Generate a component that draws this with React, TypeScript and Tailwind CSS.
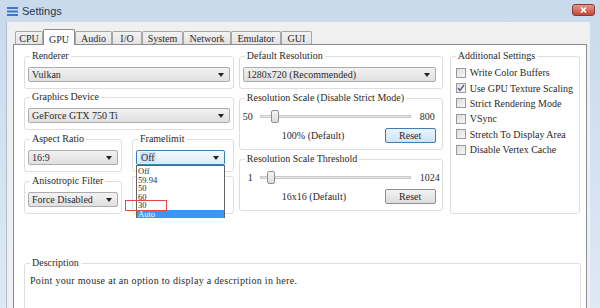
import React from 'react'

const serif = "font-['Liberation_Serif',serif]"

function Arrow() {
  return (
    <svg width="6" height="4" viewBox="0 0 6 4" className="shrink-0">
      <path d="M0 0 L6 0 L3 4 Z" fill="#222" />
    </svg>
  )
}

function Combo({ text, focused, w }: { text: string; focused?: boolean; w?: string }) {
  return (
    <div
      className={`mt-[6px] h-[15px] flex items-center rounded-[2px] border pl-[3px] pr-[5px] ${w ?? ''} ${
        focused
          ? 'border-[#3c7fb1] bg-linear-to-b from-[#f4f9fd] to-[#dcecf9]'
          : 'border-[#acacac] bg-linear-to-b from-[#f2f2f2] to-[#e0e0e0]'
      }`}
    >
      <span className="flex-1 whitespace-nowrap">
        {focused ? <span className="bg-[#cfe3f7] px-[1px]">{text}</span> : text}
      </span>
      <Arrow />
    </div>
  )
}

function Group({ title, className, children }: { title?: string; className?: string; children?: React.ReactNode }) {
  return (
    <fieldset className={`border border-[#dedede] rounded-[3px] px-[3px] pb-[6px] ${className ?? ''}`}>
      {title && <legend className="ml-[2px] px-[2px] leading-[10px] whitespace-nowrap">{title}</legend>}
      {children}
    </fieldset>
  )
}

function Slider({ min, max, pos }: { min: string; max: string; pos: number }) {
  return (
    <div className="h-[16px] mt-[5px] flex items-center">
      <span className="w-[15px] text-right pr-[5px] shrink-0">{min}</span>
      <div className="relative flex-1 h-[3px] mx-[2px] border border-[#c8c8c8] bg-[#e8e8e8]">
        <div
          className="absolute top-[-6px] w-[8px] h-[13px] rounded-[2px] border border-[#8e8f8f] bg-linear-to-b from-[#f6f6f6] to-[#dcdcdc]"
          style={{ left: pos }}
        />
      </div>
      <span className="w-[26px] pl-[7px] shrink-0">{max}</span>
    </div>
  )
}

function ResetRow({ label, focused }: { label: string; focused?: boolean }) {
  return (
    <div className="mt-[4px] h-[15px] flex items-center">
      <span className="pl-[39px] flex-1 whitespace-nowrap">{label}</span>
      <div
        className={`w-[51px] h-[15px] mr-[3px] rounded-[2px] border flex items-center justify-center ${
          focused
            ? 'border-[#3c7fb1] bg-linear-to-b from-[#eaf4fc] to-[#cde4f7]'
            : 'border-[#8f8f8f] bg-linear-to-b from-[#f3f3f3] to-[#dddddd]'
        }`}
      >
        Reset
      </div>
    </div>
  )
}

function Check({ label, checked }: { label: string; checked?: boolean }) {
  return (
    <div className="h-[15.4px] flex items-center">
      <div className="w-[10px] h-[10px] ml-[2px] mr-[4px] shrink-0 border border-[#9a9a9a] bg-linear-to-br from-[#dedede] to-[#f8f8f8] flex items-center justify-center">
        {checked && (
          <svg width="8" height="8" viewBox="0 0 8 8">
            <path d="M1 4 L3 6.5 L7 1" stroke="#4a5d80" strokeWidth="1.3" fill="none" />
          </svg>
        )}
      </div>
      <span className="whitespace-nowrap">{label}</span>
    </div>
  )
}

const tabs: [string, string][] = [
  ['CPU', 'w-[28px]'],
  ['GPU', 'w-[32px]'],
  ['Audio', 'w-[37px]'],
  ['I/O', 'w-[30px]'],
  ['System', 'w-[41px]'],
  ['Network', 'w-[48px]'],
  ['Emulator', 'w-[50px]'],
  ['GUI', 'w-[31px]'],
]

const frameOptions = ['Off', '59.94', '50', '60', '30']

export default function App() {
  return (
    <div className={`w-[600px] h-[308px] overflow-hidden flex flex-col bg-linear-to-b from-[#c9daec] to-[#dfe9f4] text-[10px] text-[#2a2a2a] ${serif}`}>
      {/* title bar */}
      <div className="h-[22px] shrink-0 flex items-center pl-[7px] pr-[5px]">
        <svg width="11" height="9" viewBox="0 0 11 9" className="mr-[4px]">
          <rect x="0" y="0" width="11" height="2" fill="#3a78c8" />
          <rect x="0" y="3.5" width="11" height="2" fill="#3a78c8" />
          <rect x="0" y="7" width="11" height="2" fill="#3a78c8" />
        </svg>
        <span className="font-['Liberation_Sans',sans-serif] text-[11px] text-[#1e3654]">Settings</span>
        <div className="ml-auto mt-[-2px] w-[23px] h-[12px] rounded-[3px] border border-[#8c3a32] bg-linear-to-b from-[#e8968a] to-[#c4443a] flex items-center justify-center">
          <svg width="7" height="6" viewBox="0 0 7 6">
            <path d="M1 0.5 L6 5.5 M6 0.5 L1 5.5" stroke="white" strokeWidth="1.6" />
          </svg>
        </div>
      </div>

      {/* client */}
      <div className="flex-1 ml-[6px] mr-[10px] border-l border-[#a9bdd3] bg-[#f0f0f0] pl-[6px] pr-[3px] pt-[7px] flex flex-col">
        <div className="h-[15px] flex items-end pl-[2px]">
          {tabs.map(([t, w]) =>
            t === 'GPU' ? (
              <div key={t} className={`${w} h-[16px] -mb-px relative z-10 bg-white border border-b-0 border-[#8c8c8c] rounded-t-[2px] flex items-start pt-[2px] justify-center`}>
                {t}
              </div>
            ) : (
              <div key={t} className={`${w} h-[13px] border border-b-0 border-[#a6a6a6] rounded-t-[2px] bg-linear-to-b from-[#f3f3f3] to-[#e3e3e3] flex items-center justify-center`}>
                {t}
              </div>
            ),
          )}
        </div>

        <div className="flex-1 bg-white border border-[#8c8c8c] pt-[6px] pl-[10px] pr-[6px] flex flex-col">
          <div className="flex items-stretch">
            {/* left column */}
            <div className="w-[211px] flex flex-col">
              <Group title="Renderer">
                <Combo text="Vulkan" />
              </Group>
              <Group title="Graphics Device" className="mt-[3px]">
                <Combo text="GeForce GTX 750 Ti" />
              </Group>
              <div className="mt-[4px] flex gap-[10px]">
                <Group title="Aspect Ratio" className="w-[98px]">
                  <Combo text="16:9" />
                </Group>
                <Group title="Framelimit" className="flex-1 pr-[8px] pl-[3px]">
                  <div className="relative">
                    <Combo text="Off" focused />
                    <div className="absolute left-0 top-full w-full h-[53px] z-20 bg-white border border-[#646464] pt-[1px] flex flex-col text-[8.5px] leading-[8.5px]">
                      {frameOptions.map((o) => (
                        <span key={o} className="pl-[1px] h-[8.5px]">{o}</span>
                      ))}
                      <span className="pl-[1px] mt-auto h-[9px] bg-[#3399ff] text-white">Auto</span>
                      <div className="absolute left-[-12px] top-[34px] w-[42px] h-[11px] border border-[#e2474a]" />
                    </div>
                  </div>
                </Group>
              </div>
              <div className="mt-[4px] flex gap-[10px]">
                <Group title="Anisotropic Filter" className="w-[98px]">
                  <Combo text="Force Disabled" />
                </Group>
                <Group className="flex-1 h-[38px]" />
              </div>
            </div>

            {/* middle column */}
            <div className="w-[205px] ml-[5px] flex flex-col">
              <Group title="Default Resolution">
                <Combo text="1280x720 (Recommended)" w="mr-[3px]" />
              </Group>
              <Group title="Resolution Scale (Disable Strict Mode)" className="mt-[4px]">
                <Slider min="50" max="800" pos={10} />
                <ResetRow label="100% (Default)" focused />
              </Group>
              <Group title="Resolution Scale Threshold" className="mt-[4px]">
                <Slider min="1" max="1024" pos={6} />
                <ResetRow label="16x16 (Default)" />
              </Group>
            </div>

            {/* right column */}
            <div className="w-[131px] ml-[7px] flex flex-col">
              <Group title="Additional Settings" className="flex-1">
                <div className="mt-[4px] flex flex-col">
                  <Check label="Write Color Buffers" />
                  <Check label="Use GPU Texture Scaling" checked />
                  <Check label="Strict Rendering Mode" />
                  <Check label="VSync" />
                  <Check label="Stretch To Display Area" />
                  <Check label="Disable Vertex Cache" />
                </div>
              </Group>
            </div>
          </div>

          <Group title="Description" className="mt-[44px] w-[557px] h-[70px]">
            <div className="mt-[5px] pl-[2px] tracking-[0.3px]">Point your mouse at an option to display a description in here.</div>
          </Group>
        </div>
      </div>
    </div>
  )
}
